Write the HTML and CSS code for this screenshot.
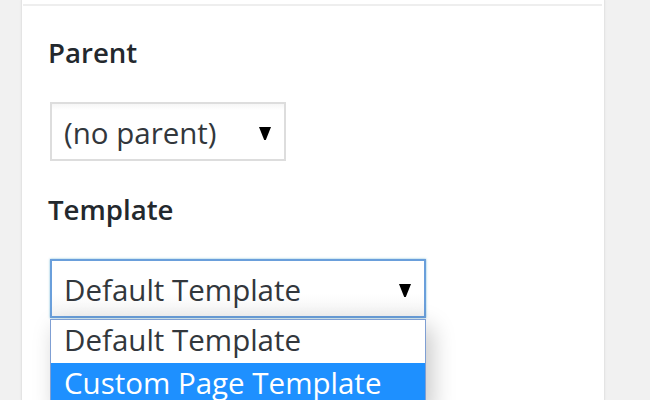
FILE: index.html
```html
<!DOCTYPE html>
<html>
<head>
<meta charset="utf-8">
<link rel="stylesheet" href="styles.css">
</head>
<body>
<div class="card">
  <div class="card-top"></div>
  <div class="content">
    <div class="label">Parent</div>
    <div class="select select-parent">
      <span class="value">(no parent)</span>
      <svg class="arrow" width="12" height="13" viewBox="0 0 12 13"><path d="M0 0 H12 L6.8 13 H5.2 Z" fill="#000"/></svg>
    </div>
    <div class="label label-template">Template</div>
    <div class="dropdown-wrap">
      <div class="select select-template">
        <span class="value">Default Template</span>
        <svg class="arrow" width="12" height="13" viewBox="0 0 12 13"><path d="M0 0 H12 L6.8 13 H5.2 Z" fill="#000"/></svg>
      </div>
      <ul class="options">
        <li class="option">Default Template</li>
        <li class="option selected">Custom Page Template</li>
      </ul>
    </div>
  </div>
</div>
</body>
</html>
```

FILE: styles.css
```css
html, body {
  margin: 0;
  padding: 0;
}
body {
  background: #f1f1f1;
  width: 650px;
  height: 400px;
  overflow: hidden;
  font-family: "Open Sans", "Noto Sans", sans-serif;
}
.card {
  margin-left: 21px;
  width: 582px;
  height: 400px;
  background: #fff;
  border-left: 1px solid #e4e4e4;
  border-right: 1px solid #e4e4e4;
  box-shadow: 0 0 2px rgba(0,0,0,0.06);
}
.card-top {
  height: 4px;
  border-bottom: 2px solid #eeeeee;
  margin: 0 2px 0 1px;
}
.content {
  padding: 27px 0 0 26px;
}
.label {
  font-size: 27.6px;
  font-weight: 600;
  line-height: 39px;
  color: #23282d;
  margin-bottom: 30px;
}
.label-template {
  margin-top: 29px;
}
.select {
  box-sizing: border-box;
  height: 59px;
  margin-left: 2px;
  display: flex;
  align-items: flex-start;
  justify-content: space-between;
  padding: 10px 13px 0 12px;
  font-size: 29.5px;
  line-height: 37px;
  color: #32373c;
}
.select .arrow {
  margin-top: 13px;
}
.select-parent {
  width: 236px;
  border: 2px solid #dddddd;
  background: linear-gradient(#f6f6f6, #fff 6px);
}
.dropdown-wrap {
  width: 376px;
  margin-left: 2px;
}
.select-template {
  margin-left: 0;
  width: 376px;
  border: 2px solid #6a9fdb;
  box-shadow: 0 0 2px rgba(30,140,190,0.6);
  background: linear-gradient(#fff 60%, #f3f3f3);
}
.options {
  list-style: none;
  margin: 1px 0 0 0;
  padding: 0;
  border: 1px solid #7f9fd3;
  background: #fff;
  box-shadow: 6px 8px 22px rgba(0,0,0,0.22);
}
.option {
  font-size: 29.5px;
  line-height: 39px;
  padding: 0 12px 4px 13px;
  color: #32373c;
  white-space: nowrap;
}
.option.selected {
  background: #1e90ff;
  color: #fff;
}
```
